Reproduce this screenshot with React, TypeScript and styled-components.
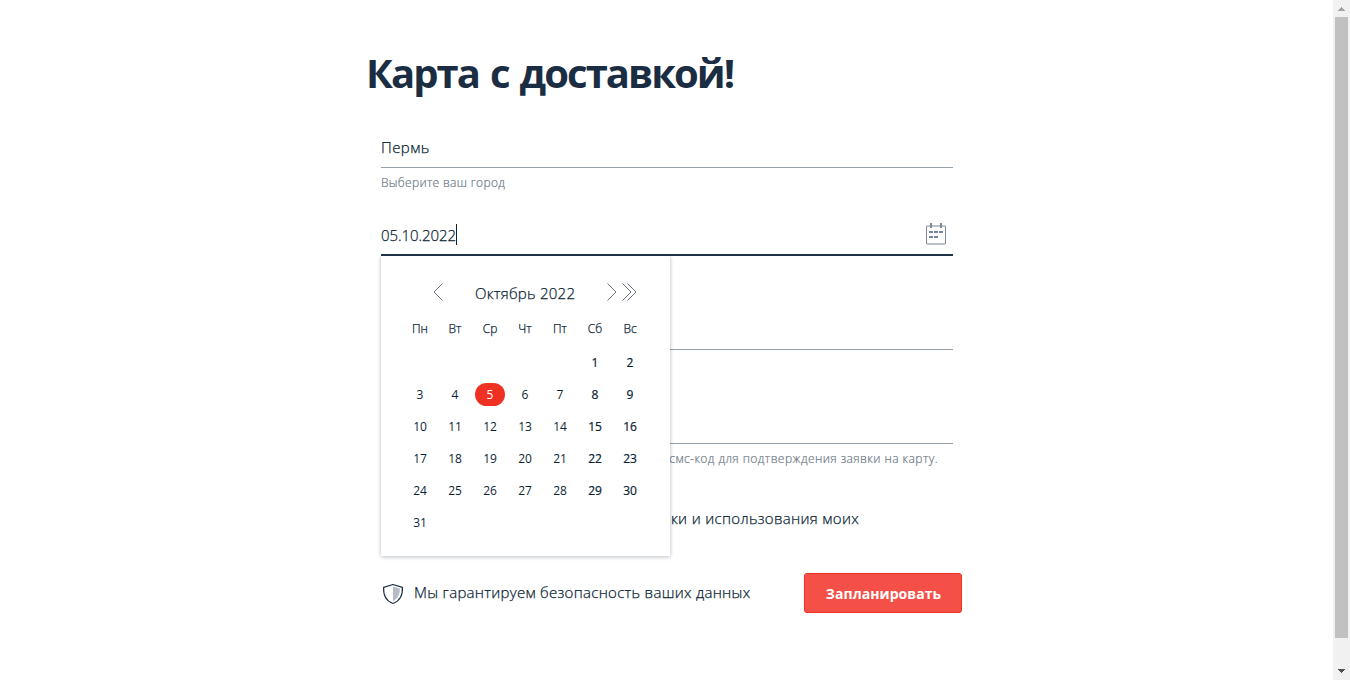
import React from "react";
import styled, { createGlobalStyle } from "styled-components";

const Global = createGlobalStyle`
  * { box-sizing: border-box; }
  html, body { margin: 0; height: 100%; overflow: hidden; background: #fff; }
  body { font-family: "Open Sans", "Noto Sans", sans-serif; color: #0b1f35; }
`;

const Page = styled.div`
  display: flex;
  justify-content: space-between;
  width: 100%;
  height: 680px;
`;

const Main = styled.main`
  flex: 1;
  padding: 48px 0 0 366px;
`;

const Title = styled.h1`
  margin: 0;
  height: 50px;
  line-height: 50px;
  font-size: 40px;
  font-weight: 700;
  letter-spacing: -1.95px;
  word-spacing: 2.6px;
  color: #1b2d42;
  white-space: nowrap;
`;

const Form = styled.form`
  margin-left: 15px;
  padding-top: 30px;
  width: 572px;
`;

const Field = styled.div<{ $height: number; $active?: boolean }>`
  position: relative;
  display: flex;
  align-items: flex-end;
  justify-content: space-between;
  height: ${(p) => p.$height}px;
  border-bottom: ${(p) => (p.$active ? "2px solid #1f3349" : "1px solid #95a0aa")};
`;

const Value = styled.span<{ $spacing?: number; $lift: number }>`
  display: inline-flex;
  align-items: center;
  height: 22px;
  margin-bottom: ${(p) => p.$lift}px;
  font-size: 15px;
  font-weight: 300;
  -webkit-text-stroke: 0.25px;
  letter-spacing: ${(p) => p.$spacing ?? 0}px;
  white-space: nowrap;
`;

const Caret = styled.i`
  width: 1px;
  height: 21px;
  margin-bottom: 1px;
  background: #0b1f35;
`;

const IconSlot = styled.span`
  display: flex;
  margin: 0 7px 9px 0;
`;

const Hint = styled.div<{ $end?: boolean; $spacing: number }>`
  display: flex;
  justify-content: ${(p) => (p.$end ? "flex-end" : "flex-start")};
  height: 31px;
  padding-right: ${(p) => (p.$end ? 15 : 0)}px;
  font-size: 12px;
  font-weight: 300;
  -webkit-text-stroke: 0.2px;
  line-height: 30px;
  color: #6d7986;
  letter-spacing: ${(p) => p.$spacing}px;
  white-space: nowrap;
`;

const Consent = styled.div`
  display: flex;
  justify-content: flex-end;
  margin-top: 33px;
  padding-right: 94px;
  height: 20px;
  line-height: 20px;
  font-size: 15px;
  font-weight: 300;
  -webkit-text-stroke: 0.25px;
  letter-spacing: 0.32px;
  white-space: nowrap;
`;

const Footer = styled.div`
  display: flex;
  align-items: center;
  width: 581px;
  height: 40px;
  margin-top: 45px;
`;

const Guarantee = styled.span`
  flex: 1;
  margin-left: 9px;
  padding-bottom: 2px;
  font-size: 15px;
  font-weight: 300;
  -webkit-text-stroke: 0.25px;
  letter-spacing: 0.29px;
  white-space: nowrap;
`;

const Submit = styled.button`
  width: 158px;
  height: 40px;
  padding: 1px 0 0 1px;
  border: 1px solid #ef3124;
  border-radius: 3px;
  background: #f45047;
  color: #fff;
  font-family: inherit;
  font-size: 14px;
  font-weight: 700;
  letter-spacing: 0.05px;
`;

const Popup = styled.div`
  position: absolute;
  z-index: 2;
  top: calc(100% + 2px);
  left: 0;
  width: 289px;
  height: 300px;
  padding: 25px 23px 0 21px;
  background: #fff;
  box-shadow: 0 0 4px rgba(11, 31, 53, 0.22), 0 2px 4px rgba(11, 31, 53, 0.1);
  clip-path: inset(0 -10px -10px -10px);
`;

const MonthBar = styled.div`
  display: flex;
  align-items: center;
  height: 24px;
  padding: 0 10px 0 31px;
`;

const Month = styled.span`
  flex: 1;
  margin-left: 31px;
  font-size: 15px;
  font-weight: 300;
  -webkit-text-stroke: 0.25px;
  letter-spacing: 0.25px;
  white-space: nowrap;
`;

const Arrows = styled.span`
  display: flex;
  gap: 5px;
`;

const Arrow = styled.svg`
  display: block;
  margin-bottom: 2px;
`;

const Grid = styled.div<{ $row: number; $top: number }>`
  display: grid;
  grid-template-columns: repeat(7, 35px);
  grid-auto-rows: ${(p) => p.$row}px;
  margin-top: ${(p) => p.$top}px;
`;

const Cell = styled.span<{ $weekend?: boolean }>`
  display: flex;
  align-items: center;
  justify-content: center;
  font-size: 12px;
  font-weight: 400;
  text-indent: 1px;
  -webkit-text-stroke: ${(p) => (p.$weekend ? 0.22 : 0)}px;
`;

const Weekday = styled(Cell)`
  font-weight: 300;
  -webkit-text-stroke: 0.25px;
`;

const Selected = styled.span`
  width: 30px;
  height: 23px;
  border-radius: 12px;
  background: #ef3124;
  color: #fff;
  line-height: 23px;
  text-align: center;
`;

const Scrollbar = styled.div`
  display: flex;
  flex-direction: column;
  align-items: center;
  width: 17px;
  height: 680px;
  background: #f1f1f1;
`;

const ScrollArrow = styled.span`
  display: flex;
  height: 17px;
`;

const Thumb = styled.span`
  width: 13px;
  height: 621px;
  margin-bottom: 25px;
  background: #c1c1c1;
`;

const Chevron = ({ d, width = 11 }: { d: string; width?: number }) => (
  <Arrow width={width} height="18" viewBox={`0 0 ${width} 18`} fill="none" stroke="#66727f" strokeWidth="1">
    <path d={d} />
  </Arrow>
);

const CalendarIcon = () => (
  <svg width="20" height="22" viewBox="0 0 20 22">
    <path d="M1 2h18v2H1zM1 20h18v2H1z" fill="#bcc1c9" />
    <path d="M0 3h1v18H0zM19 3h1v18h-1zM4 0h2v5H4zM14 0h2v5h-2z" fill="#7f8a99" />
    <path d="M3 8h4v2H3zM8 8h4v2H8zM13 8h4v2h-4zM3 13h4v2H3zM8 13h4v2H8z" fill="#77849a" />
  </svg>
);

const ShieldIcon = () => (
  <svg width="24" height="24" viewBox="0 0 24 24" fill="none">
    <path d="M12 5.500l6.800 2.100c.3 5.600-1.700 9.700-6.800 12.600z" fill="#b6bdc6" />
    <path
      d="M12 3.500L2.600 6.400C2.200 14 5 20 12 22.500 19 20 21.800 14 21.400 6.400z"
      stroke="#1d2f45"
      strokeWidth="1.200"
      strokeLinejoin="round"
    />
  </svg>
);

const weekdays = ["Пн", "Вт", "Ср", "Чт", "Пт", "Сб", "Вс"];
const days: (number | null)[] = [null, null, null, null, null, ...Array.from({ length: 31 }, (_, i) => i + 1)];

const Calendar = () => (
  <Popup>
    <MonthBar>
      <Chevron d="M9.500 0.500L1 9l8.500 8.500" />
      <Month>Октябрь 2022</Month>
      <Arrows>
        <Chevron d="M1.500 0.500L10 9l-8.500 8.500" />
        <Chevron width={15} d="M0.500 0.500L9 9l-8.500 8.500M5.500 0.500L14 9l-8.500 8.500" />
      </Arrows>
    </MonthBar>
    <Grid $row={24} $top={11}>
      {weekdays.map((d) => (
        <Weekday key={d}>{d}</Weekday>
      ))}
    </Grid>
    <Grid $row={32} $top={6}>
      {days.map((d, i) => (
        <Cell key={i} $weekend={i % 7 > 4}>
          {d === 5 ? <Selected>{d}</Selected> : d}
        </Cell>
      ))}
    </Grid>
  </Popup>
);

export default function App() {
  return (
    <Page>
      <Global />
      <Main>
        <Title>Карта с доставкой!</Title>
        <Form>
          <Field $height={40}>
            <Value $lift={9} $spacing={0.45}>Пермь</Value>
          </Field>
          <Hint $spacing={0.32}>Выберите ваш город</Hint>
          <Field $height={57} $active>
            <Value $lift={8} $spacing={-0.07}>
              05.10.2022
              <Caret />
            </Value>
            <IconSlot>
              <CalendarIcon />
            </IconSlot>
            <Calendar />
          </Field>
          <Field $height={94} />
          <Field $height={94} />
          <Hint $end $spacing={0.44}>
            смс-код для подтверждения заявки на карту.
          </Hint>
          <Consent>ки и использования моих</Consent>
          <Footer>
            <ShieldIcon />
            <Guarantee>Мы гарантируем безопасность ваших данных</Guarantee>
            <Submit type="button">Запланировать</Submit>
          </Footer>
        </Form>
      </Main>
      <Scrollbar>
        <ScrollArrow>
          <svg width="7" height="17" viewBox="0 0 7 17">
            <path d="M3 7h1v1h1v1h1v1h1v1H0v-1h1V9h1V8h1z" fill="#a3a3a3" />
          </svg>
        </ScrollArrow>
        <Thumb />
        <ScrollArrow>
          <svg width="7" height="17" viewBox="0 0 7 17">
            <path d="M0 6h7v1H6v1H5v1H4v1H3V9H2V8H1V7H0z" fill="#505050" />
          </svg>
        </ScrollArrow>
      </Scrollbar>
    </Page>
  );
}
